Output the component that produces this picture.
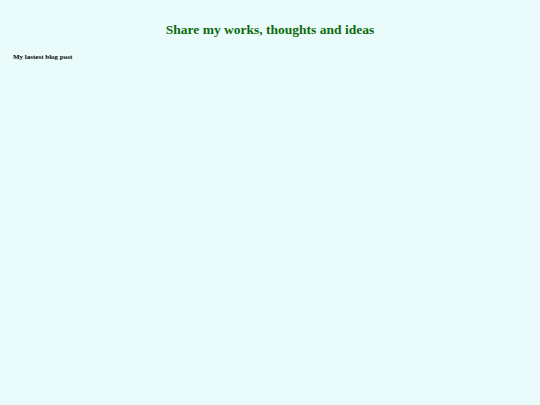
export default function App() {
  return (
    <div className="min-h-[405px] bg-[#e9fbfa] px-[13px] pt-[20px]" style={{ fontFamily: '"Liberation Serif", "Times New Roman", serif' }}>
      <h1 className="text-center text-[13.5px] leading-[20px] font-bold text-[#0d6b0d]">Share my works, thoughts and ideas</h1>
      <p className="mt-[12px] text-[7px] leading-[10px] font-bold text-black">My lastest blog post</p>
    </div>
  )
}
